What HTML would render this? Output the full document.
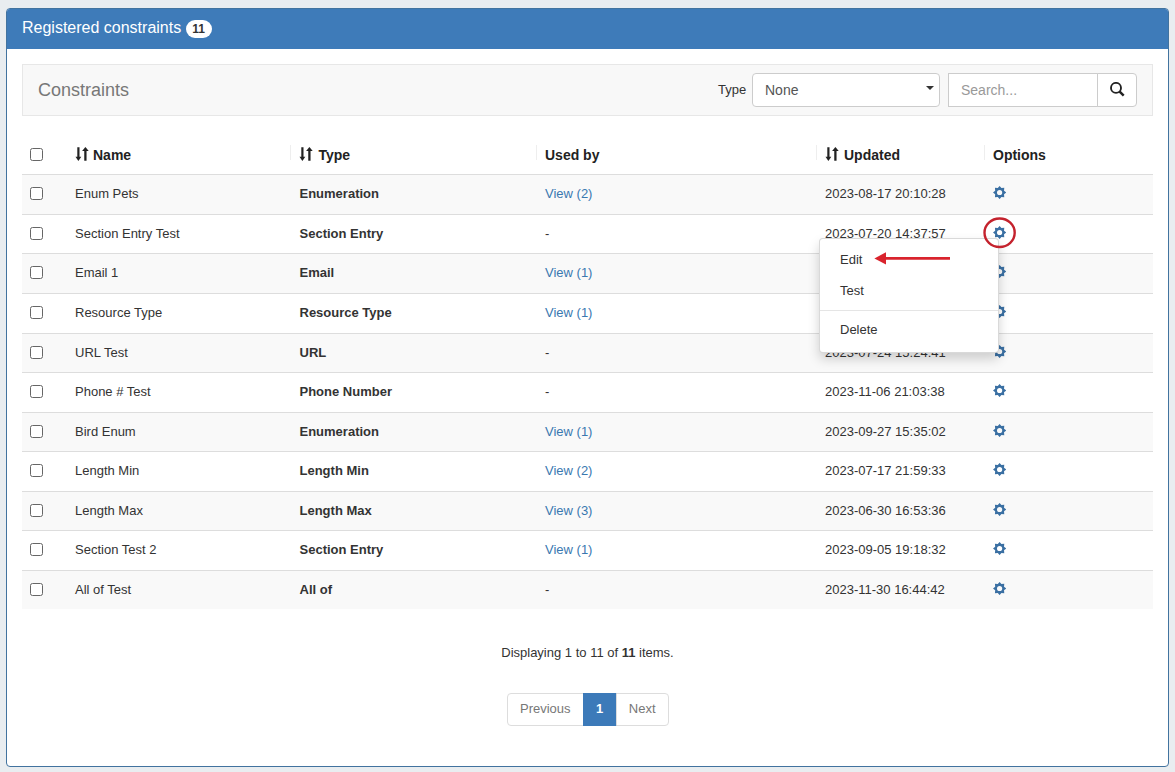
<!DOCTYPE html>
<html>
<head>
<meta charset="utf-8">
<title>Registered constraints</title>
<style>
*{box-sizing:border-box}
html,body{margin:0;padding:0}
body{width:1175px;height:772px;overflow:hidden;background:#e9edf0;font-family:"Liberation Sans",sans-serif;font-size:13px;line-height:1.42857;color:#333;position:relative}
.panel{position:absolute;left:6px;top:8px;width:1163px;height:759px;background:#fff;border:1px solid #42739f;border-radius:4px;overflow:hidden}
.heading{height:40px;background:#3e7bb9;color:#fff;font-size:16px;padding:0 15px;line-height:37px;white-space:nowrap}
.badge{display:inline-block;background:#fff;color:#333;font-size:12px;font-weight:bold;border-radius:10px;height:18px;line-height:18px;width:26px;text-align:center;vertical-align:middle;margin-left:0;position:relative;top:0.5px}
.navbar{position:absolute;left:15px;top:55px;width:1131px;height:52px;background:#f8f8f8;border:1px solid #e7e7e7}
.brand{position:absolute;left:15px;top:0;font-size:18px;line-height:50px;color:#777}
.lbl{position:absolute;left:695px;top:0;line-height:49px;font-size:13px;color:#333}
.select{position:absolute;left:729px;top:8px;width:188px;height:34px;border:1px solid #ccc;border-radius:4px;background:#fff;font-size:14px;color:#555;line-height:32px;padding-left:12px}
.select:after{content:"";position:absolute;right:5px;top:12px;border:4px solid transparent;border-top:4px solid #333;border-bottom:0}
.search{position:absolute;left:925px;top:8px;width:150px;height:34px;border:1px solid #ccc;border-radius:0;background:#fff;font-size:14px;color:#999;line-height:32px;padding-left:12px}
.sbtn{position:absolute;left:1074px;top:8px;width:40px;height:34px;border:1px solid #ccc;border-radius:0 4px 4px 0;background:#fff}
.sbtn svg{position:absolute;left:12px;top:8px}
.thead{position:absolute;left:15px;top:126px;width:1131px;height:40px;border-bottom:1px solid #ddd;font-size:14px;font-weight:bold;color:#222;line-height:40px;white-space:nowrap}
.thead span,.row span{position:absolute;top:0}
.thead .sep{width:1px;height:15px;top:10px;background:#eee}
.sort{vertical-align:-1px;margin-left:-1px;margin-right:5px}
.c2 .sort{margin-left:-2px;margin-right:6px}.c1 .sort{margin-right:4px}.c4 .sort{margin-left:-1px;margin-right:5px}
.row{position:absolute;left:15px;width:1131px;border-top:1px solid #ddd;white-space:nowrap}
.row.odd{background:#f9f9f9}
.row span{line-height:38px}
.c1{left:53px}.c2{left:277.5px}.c3{left:523px}.c4{left:803px}.c5{left:971px}
.row .c2{font-weight:bold}
a{color:#3a78b0;text-decoration:none}
span.cb{left:8px;top:12px !important;width:13px;height:13px;border:1px solid #666;border-radius:2.5px;background:#fff}
.thead span.cb{top:13px !important}
.gear{position:absolute;left:-1px;top:10px}
.info{position:absolute;left:0;width:100%;top:635px;text-align:center;font-size:13px}
.pager{position:absolute;left:500px;top:684px;height:33px;display:flex}
.pager div{height:33px;line-height:29px;border:1px solid #ddd;padding:0 12px;font-size:13px;color:#777;background:#fff;margin-left:-1px}
.pager div:first-child{border-radius:4px 0 0 4px;margin-left:0}
.pager div:last-child{border-radius:0 4px 4px 0}
.pager div.act{background:#3c7ab9;border-color:#3c7ab9;color:#fff;font-weight:bold;padding:0 12.5px}
.menu{position:absolute;left:812px;top:229px;width:180px;height:115px;background:#fff;border:1px solid rgba(0,0,0,.15);border-radius:4px;box-shadow:0 6px 12px rgba(0,0,0,.175)}
.menu div{position:absolute;left:20px;font-size:13px;color:#333;line-height:20px}
.menu .hr{left:0;width:100%;height:1px;background:#e5e5e5;top:71px}
.anno{position:absolute;left:0;top:0;pointer-events:none}
</style>
</head>
<body>
<div class="panel">
  <div class="heading">Registered constraints <span class="badge">11</span></div>
  <div class="navbar">
    <div class="brand">Constraints</div>
    <div class="lbl">Type</div>
    <div class="select">None</div>
    <div class="search">Search...</div>
    <div class="sbtn"><svg width="16" height="16" viewBox="0 0 16 16"><circle cx="6" cy="5.9" r="5" fill="none" stroke="#222" stroke-width="1.9"/><path d="M9.4 9.3L13.7 13.6" stroke="#222" stroke-width="2.5"/></svg></div>
  </div>
  <div class="thead">
    <span class="cb"></span>
    <span class="c1"><svg class="sort" width="15" height="15" viewBox="0.00 -0.40 15 15"><path d="M4.4 0.8V11.5" stroke="#222" stroke-width="2.2" fill="none"/><path d="M1.5 10.4H7.3L4.4 14.5z" fill="#222"/><path d="M11.4 14.4V3.6" stroke="#222" stroke-width="2.3" fill="none"/><path d="M8.1 4.6H14.7L11.4 0.5z" fill="#222"/></svg>Name</span>
    <span class="sep" style="left:268px"></span><span class="c2"><svg class="sort" width="15" height="15" viewBox="0.00 -0.40 15 15"><path d="M4.4 0.8V11.5" stroke="#222" stroke-width="2.2" fill="none"/><path d="M1.5 10.4H7.3L4.4 14.5z" fill="#222"/><path d="M11.4 14.4V3.6" stroke="#222" stroke-width="2.3" fill="none"/><path d="M8.1 4.6H14.7L11.4 0.5z" fill="#222"/></svg>Type</span>
    <span class="sep" style="left:514px"></span><span class="c3">Used by</span>
    <span class="sep" style="left:794px"></span><span class="c4"><svg class="sort" width="15" height="15" viewBox="0.00 -0.40 15 15"><path d="M4.4 0.8V11.5" stroke="#222" stroke-width="2.2" fill="none"/><path d="M1.5 10.4H7.3L4.4 14.5z" fill="#222"/><path d="M11.4 14.4V3.6" stroke="#222" stroke-width="2.3" fill="none"/><path d="M8.1 4.6H14.7L11.4 0.5z" fill="#222"/></svg>Updated</span>
    <span class="sep" style="left:962px"></span><span class="c5">Options</span>
  </div>
<div class="row odd" style="top:165px;height:40px"><span class="cb"></span><span class="c1">Enum Pets</span><span class="c2">Enumeration</span><span class="c3"><a>View (2)</a></span><span class="c4">2023-08-17 20:10:28</span><span class="c5"><svg class="gear" width="14" height="14" viewBox="-7.6 -7.5 14 14"><path fill="#3b70a3" fill-rule="evenodd" d="M0.00,-6.60L1.84,-4.43L4.67,-4.67L4.43,-1.84L6.60,0.00L4.43,1.84L4.67,4.67L1.84,4.43L0.00,6.60L-1.84,4.43L-4.67,4.67L-4.43,1.84L-6.60,0.00L-4.43,-1.84L-4.67,-4.67L-1.84,-4.43zM2.6 0A2.6 2.6 0 1 0 -2.6 0A2.6 2.6 0 1 0 2.6 0z"/></svg></span></div>
<div class="row" style="top:205px;height:39px"><span class="cb"></span><span class="c1">Section Entry Test</span><span class="c2">Section Entry</span><span class="c3">-</span><span class="c4">2023-07-20 14:37:57</span><span class="c5"><svg class="gear" width="14" height="14" viewBox="-7.6 -7.5 14 14"><path fill="#3b70a3" fill-rule="evenodd" d="M0.00,-6.60L1.84,-4.43L4.67,-4.67L4.43,-1.84L6.60,0.00L4.43,1.84L4.67,4.67L1.84,4.43L0.00,6.60L-1.84,4.43L-4.67,4.67L-4.43,1.84L-6.60,0.00L-4.43,-1.84L-4.67,-4.67L-1.84,-4.43zM2.6 0A2.6 2.6 0 1 0 -2.6 0A2.6 2.6 0 1 0 2.6 0z"/></svg></span></div>
<div class="row odd" style="top:244px;height:40px"><span class="cb"></span><span class="c1">Email 1</span><span class="c2">Email</span><span class="c3"><a>View (1)</a></span><span class="c4">2023-08-24 18:22:10</span><span class="c5"><svg class="gear" width="14" height="14" viewBox="-7.6 -7.5 14 14"><path fill="#3b70a3" fill-rule="evenodd" d="M0.00,-6.60L1.84,-4.43L4.67,-4.67L4.43,-1.84L6.60,0.00L4.43,1.84L4.67,4.67L1.84,4.43L0.00,6.60L-1.84,4.43L-4.67,4.67L-4.43,1.84L-6.60,0.00L-4.43,-1.84L-4.67,-4.67L-1.84,-4.43zM2.6 0A2.6 2.6 0 1 0 -2.6 0A2.6 2.6 0 1 0 2.6 0z"/></svg></span></div>
<div class="row" style="top:284px;height:40px"><span class="cb"></span><span class="c1">Resource Type</span><span class="c2">Resource Type</span><span class="c3"><a>View (1)</a></span><span class="c4">2023-08-22 16:41:09</span><span class="c5"><svg class="gear" width="14" height="14" viewBox="-7.6 -7.5 14 14"><path fill="#3b70a3" fill-rule="evenodd" d="M0.00,-6.60L1.84,-4.43L4.67,-4.67L4.43,-1.84L6.60,0.00L4.43,1.84L4.67,4.67L1.84,4.43L0.00,6.60L-1.84,4.43L-4.67,4.67L-4.43,1.84L-6.60,0.00L-4.43,-1.84L-4.67,-4.67L-1.84,-4.43zM2.6 0A2.6 2.6 0 1 0 -2.6 0A2.6 2.6 0 1 0 2.6 0z"/></svg></span></div>
<div class="row odd" style="top:324px;height:39px"><span class="cb"></span><span class="c1">URL Test</span><span class="c2">URL</span><span class="c3">-</span><span class="c4">2023-07-24 15:24:41</span><span class="c5"><svg class="gear" width="14" height="14" viewBox="-7.6 -7.5 14 14"><path fill="#3b70a3" fill-rule="evenodd" d="M0.00,-6.60L1.84,-4.43L4.67,-4.67L4.43,-1.84L6.60,0.00L4.43,1.84L4.67,4.67L1.84,4.43L0.00,6.60L-1.84,4.43L-4.67,4.67L-4.43,1.84L-6.60,0.00L-4.43,-1.84L-4.67,-4.67L-1.84,-4.43zM2.6 0A2.6 2.6 0 1 0 -2.6 0A2.6 2.6 0 1 0 2.6 0z"/></svg></span></div>
<div class="row" style="top:363px;height:40px"><span class="cb"></span><span class="c1">Phone # Test</span><span class="c2">Phone Number</span><span class="c3">-</span><span class="c4">2023-11-06 21:03:38</span><span class="c5"><svg class="gear" width="14" height="14" viewBox="-7.6 -7.5 14 14"><path fill="#3b70a3" fill-rule="evenodd" d="M0.00,-6.60L1.84,-4.43L4.67,-4.67L4.43,-1.84L6.60,0.00L4.43,1.84L4.67,4.67L1.84,4.43L0.00,6.60L-1.84,4.43L-4.67,4.67L-4.43,1.84L-6.60,0.00L-4.43,-1.84L-4.67,-4.67L-1.84,-4.43zM2.6 0A2.6 2.6 0 1 0 -2.6 0A2.6 2.6 0 1 0 2.6 0z"/></svg></span></div>
<div class="row odd" style="top:403px;height:39px"><span class="cb"></span><span class="c1">Bird Enum</span><span class="c2">Enumeration</span><span class="c3"><a>View (1)</a></span><span class="c4">2023-09-27 15:35:02</span><span class="c5"><svg class="gear" width="14" height="14" viewBox="-7.6 -7.5 14 14"><path fill="#3b70a3" fill-rule="evenodd" d="M0.00,-6.60L1.84,-4.43L4.67,-4.67L4.43,-1.84L6.60,0.00L4.43,1.84L4.67,4.67L1.84,4.43L0.00,6.60L-1.84,4.43L-4.67,4.67L-4.43,1.84L-6.60,0.00L-4.43,-1.84L-4.67,-4.67L-1.84,-4.43zM2.6 0A2.6 2.6 0 1 0 -2.6 0A2.6 2.6 0 1 0 2.6 0z"/></svg></span></div>
<div class="row" style="top:442px;height:40px"><span class="cb"></span><span class="c1">Length Min</span><span class="c2">Length Min</span><span class="c3"><a>View (2)</a></span><span class="c4">2023-07-17 21:59:33</span><span class="c5"><svg class="gear" width="14" height="14" viewBox="-7.6 -7.5 14 14"><path fill="#3b70a3" fill-rule="evenodd" d="M0.00,-6.60L1.84,-4.43L4.67,-4.67L4.43,-1.84L6.60,0.00L4.43,1.84L4.67,4.67L1.84,4.43L0.00,6.60L-1.84,4.43L-4.67,4.67L-4.43,1.84L-6.60,0.00L-4.43,-1.84L-4.67,-4.67L-1.84,-4.43zM2.6 0A2.6 2.6 0 1 0 -2.6 0A2.6 2.6 0 1 0 2.6 0z"/></svg></span></div>
<div class="row odd" style="top:482px;height:39px"><span class="cb"></span><span class="c1">Length Max</span><span class="c2">Length Max</span><span class="c3"><a>View (3)</a></span><span class="c4">2023-06-30 16:53:36</span><span class="c5"><svg class="gear" width="14" height="14" viewBox="-7.6 -7.5 14 14"><path fill="#3b70a3" fill-rule="evenodd" d="M0.00,-6.60L1.84,-4.43L4.67,-4.67L4.43,-1.84L6.60,0.00L4.43,1.84L4.67,4.67L1.84,4.43L0.00,6.60L-1.84,4.43L-4.67,4.67L-4.43,1.84L-6.60,0.00L-4.43,-1.84L-4.67,-4.67L-1.84,-4.43zM2.6 0A2.6 2.6 0 1 0 -2.6 0A2.6 2.6 0 1 0 2.6 0z"/></svg></span></div>
<div class="row" style="top:521px;height:40px"><span class="cb"></span><span class="c1">Section Test 2</span><span class="c2">Section Entry</span><span class="c3"><a>View (1)</a></span><span class="c4">2023-09-05 19:18:32</span><span class="c5"><svg class="gear" width="14" height="14" viewBox="-7.6 -7.5 14 14"><path fill="#3b70a3" fill-rule="evenodd" d="M0.00,-6.60L1.84,-4.43L4.67,-4.67L4.43,-1.84L6.60,0.00L4.43,1.84L4.67,4.67L1.84,4.43L0.00,6.60L-1.84,4.43L-4.67,4.67L-4.43,1.84L-6.60,0.00L-4.43,-1.84L-4.67,-4.67L-1.84,-4.43zM2.6 0A2.6 2.6 0 1 0 -2.6 0A2.6 2.6 0 1 0 2.6 0z"/></svg></span></div>
<div class="row odd" style="top:561px;height:39px"><span class="cb"></span><span class="c1">All of Test</span><span class="c2">All of</span><span class="c3">-</span><span class="c4">2023-11-30 16:44:42</span><span class="c5"><svg class="gear" width="14" height="14" viewBox="-7.6 -7.5 14 14"><path fill="#3b70a3" fill-rule="evenodd" d="M0.00,-6.60L1.84,-4.43L4.67,-4.67L4.43,-1.84L6.60,0.00L4.43,1.84L4.67,4.67L1.84,4.43L0.00,6.60L-1.84,4.43L-4.67,4.67L-4.43,1.84L-6.60,0.00L-4.43,-1.84L-4.67,-4.67L-1.84,-4.43zM2.6 0A2.6 2.6 0 1 0 -2.6 0A2.6 2.6 0 1 0 2.6 0z"/></svg></span></div>
  <div class="info">Displaying 1 to 11 of <b>11</b> items.</div>
  <div class="pager"><div>Previous</div><div class="act">1</div><div>Next</div></div>
  <div class="menu"><div style="top:10.5px">Edit</div><div style="top:42px">Test</div><div class="hr"></div><div style="top:81px">Delete</div></div>
  <svg class="anno" width="1163" height="759" viewBox="7 9 1163 759">
    <ellipse cx="999.6" cy="232.75" rx="15.1" ry="14.2" fill="none" stroke="#c4222d" stroke-width="2.4"/>
    <path d="M885 258.4H950" stroke="#d9232d" stroke-width="2.6" fill="none"/>
    <path d="M874.4 258.4L886 252.2V264.6z" fill="#d9232d"/>
  </svg>
</div>
</body>
</html>
